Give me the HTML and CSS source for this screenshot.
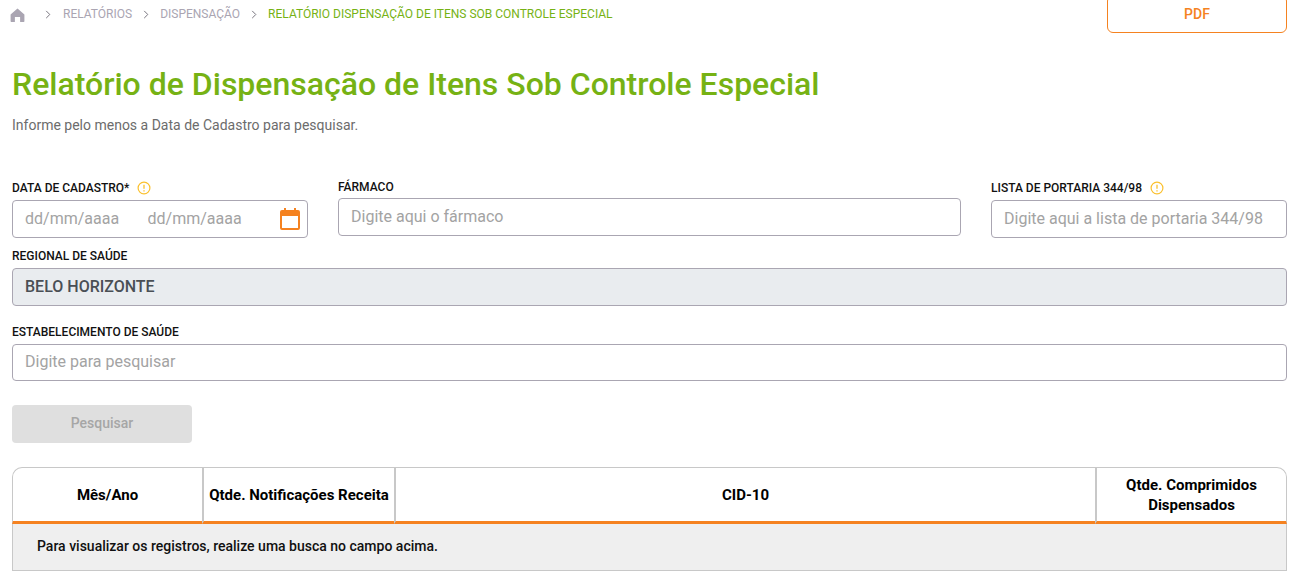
FILE: index.html
```html
<!DOCTYPE html>
<html lang="pt-BR">
<head>
    <meta charset="UTF-8">
    <meta name="viewport" content="width=device-width, initial-scale=1.0">
    <title>Relatório de Dispensação de Itens Sob Controle Especial</title>
    <link rel="stylesheet" href="styles.css">
</head>
<body>

<header class="top-bar">
    <nav class="breadcrumb">
        <svg class="home-icon" viewBox="0 0 16 15" fill="currentColor">
            <path d="M8 .6 .6 7v7.2c0 .4.3.7.7.7h3.9V9.6h5.6v5.3h3.9c.4 0 .7-.3.7-.7V7z"/>
        </svg>
        <svg class="chevron chevron-first" viewBox="0 0 6 10" fill="none" stroke="currentColor" stroke-width="1.1"><path d="M1 1l4 4-4 4"/></svg>
        <a class="crumb">Relatórios</a>
        <svg class="chevron" viewBox="0 0 6 10" fill="none" stroke="currentColor" stroke-width="1.1"><path d="M1 1l4 4-4 4"/></svg>
        <a class="crumb">Dispensação</a>
        <svg class="chevron" viewBox="0 0 6 10" fill="none" stroke="currentColor" stroke-width="1.1"><path d="M1 1l4 4-4 4"/></svg>
        <span class="crumb crumb-active">Relatório Dispensação de Itens Sob Controle Especial</span>
    </nav>
    <button class="pdf-button">PDF</button>
</header>

<main>
    <h1>Relatório de Dispensação de Itens Sob Controle Especial</h1>
    <p class="hint">Informe pelo menos a Data de Cadastro para pesquisar.</p>

    <section class="filters-row">
        <div class="field">
            <label class="field-label">Data de Cadastro*
                <svg class="info-icon" viewBox="0 0 14 14" fill="none" stroke="currentColor"><circle cx="7" cy="7" r="5.9" stroke-width="1.2"/><path d="M7 3.8v4" stroke-width="1.3"/><path d="M7 9.2v1.2" stroke-width="1.3"/></svg>
            </label>
            <div class="input date-range">
                <input class="date-input" type="text" placeholder="dd/mm/aaaa">
                <input class="date-input" type="text" placeholder="dd/mm/aaaa">
                <svg class="calendar-icon" viewBox="0 0 20 22" fill="#f58220">
                    <path d="M4 0h2v2h8V0h2v2h2a2 2 0 0 1 2 2v16a2 2 0 0 1-2 2H2a2 2 0 0 1-2-2V4a2 2 0 0 1 2-2h2zM2 8v12h16V8z"/>
                </svg>
            </div>
        </div>
        <div class="field field-farmaco">
            <label class="field-label">Fármaco</label>
            <input class="input" type="text" placeholder="Digite aqui o fármaco">
        </div>
        <div class="field">
            <label class="field-label">Lista de Portaria 344/98
                <svg class="info-icon" viewBox="0 0 14 14" fill="none" stroke="currentColor"><circle cx="7" cy="7" r="5.9" stroke-width="1.2"/><path d="M7 3.8v4" stroke-width="1.3"/><path d="M7 9.2v1.2" stroke-width="1.3"/></svg>
            </label>
            <input class="input" type="text" placeholder="Digite aqui a lista de portaria 344/98">
        </div>
    </section>

    <div class="field field-regional">
        <label class="field-label">Regional de Saúde</label>
        <input class="input input-disabled" type="text" value="BELO HORIZONTE" disabled>
    </div>

    <div class="field field-estab">
        <label class="field-label">Estabelecimento de Saúde</label>
        <input class="input" type="text" placeholder="Digite para pesquisar">
    </div>

    <button class="search-button" disabled>Pesquisar</button>

    <table class="results">
        <thead>
            <tr>
                <th class="col-month">Mês/Ano</th>
                <th class="col-notif">Qtde. Notificações Receita</th>
                <th>CID-10</th>
                <th class="col-qty">Qtde. Comprimidos Dispensados</th>
            </tr>
        </thead>
        <tbody>
            <tr>
                <td colspan="4">Para visualizar os registros, realize uma busca no campo acima.</td>
            </tr>
        </tbody>
    </table>
</main>

</body>
</html>
```

FILE: styles.css
```css
:root {
    --green: #76b214;
    --orange: #f58220;
    --border: #aaa6b2;
    --placeholder: #a3a3a3;
    --yellow: #fbc02d;
}

* { margin: 0; padding: 0; box-sizing: border-box; }

body {
    background: #fff;
    color: #000;
    font-family: Roboto, "Noto Sans", sans-serif;
    padding: 0 12px;
    overflow: hidden;
}

/* --- Top bar --- */
.top-bar {
    display: flex;
    justify-content: space-between;
    align-items: flex-start;
    height: 33px;
}

.breadcrumb {
    display: flex;
    align-items: center;
    height: 28px;
    font-size: 12px;
    color: #aaa5b2;
    text-transform: uppercase;
}
.home-icon {
    width: 15px;
    height: 14px;
    margin-left: -2px;
    margin-top: 1px;
}
.chevron {
    width: 6px;
    height: 9px;
    margin: 0 11px;
    color: #77737d;
}
.chevron-first { margin-left: 20px; margin-right: 12px; }
.crumb-active { color: var(--green); }

.pdf-button {
    width: 180px;
    height: 38px;
    margin-top: -5px;
    background: #fff;
    border: 1px solid var(--orange);
    border-radius: 6px;
    color: var(--orange);
    font-family: inherit;
    font-size: 14px;
    font-weight: 500;
}

/* --- Heading --- */
h1 {
    margin-top: 32px;
    font-size: 32px;
    line-height: 38px;
    font-weight: 500;
    color: var(--green);
}
.hint {
    margin-top: 12px;
    font-size: 14px;
    line-height: 20px;
    color: #6c6c6c;
}

/* --- Filters --- */
.filters-row {
    display: grid;
    grid-template-columns: 296px 1fr 296px;
    column-gap: 30px;
    margin-top: 45px;
}
.field { display: flex; flex-direction: column; }
.field-label {
    display: flex;
    align-items: center;
    gap: 8px;
    height: 20px;
    padding-bottom: 4px;
    font-size: 12px;
    font-weight: 500;
    color: #111;
    text-transform: uppercase;
}
.info-icon {
    width: 14px;
    height: 14px;
    color: var(--yellow);
}
.field-farmaco .field-label { height: 18px; padding-bottom: 5px; }

.input {
    width: 100%;
    height: 38px;
    padding: 0 12px 2px;
    background: #fff;
    border: 1px solid var(--border);
    border-radius: 4px;
    font-family: inherit;
    font-size: 16px;
    color: #495057;
    outline: none;
}
.input::placeholder { color: var(--placeholder); opacity: 1; }

.date-range {
    display: flex;
    align-items: center;
}
.date-input {
    width: 122.5px;
    border: 0;
    outline: none;
    font-family: inherit;
    font-size: 16px;
}
.date-input::placeholder { color: var(--placeholder); opacity: 1; }
.calendar-icon {
    width: 20px;
    height: 22px;
    margin-left: auto;
    margin-right: -5px;
    margin-bottom: -2px;
}

.field-regional { margin-top: 10px; }
.input-disabled {
    background: #e9ecef;
    color: #4a4f55;
    font-weight: 500;
}
.field-estab { margin-top: 18px; }
.field-estab .input { height: 37px; }

/* --- Search --- */
.search-button {
    display: block;
    width: 180px;
    height: 38px;
    margin-top: 24px;
    padding-bottom: 2px;
    background: #dfdfdf;
    border: 0;
    border-radius: 4px;
    color: #a6a6a6;
    font-family: inherit;
    font-size: 14px;
    font-weight: 500;
}

/* --- Results table --- */
.results {
    width: 100%;
    margin-top: 24px;
    table-layout: fixed;
    border-collapse: separate;
    border-spacing: 0;
}
.results th {
    height: 57px;
    padding: 0 4px;
    background: #fff;
    color: #000;
    font-size: 15px;
    font-weight: 700;
    line-height: 20px;
    border-top: 1px solid #c8c8c8;
    border-left: 2px solid #c8c8c8;
    border-bottom: 3px solid var(--orange);
}
.results th:first-child { border-left: 1px solid #c8c8c8; border-top-left-radius: 10px; }
.results th:last-child { border-right: 1px solid #c8c8c8; border-top-right-radius: 10px; }
.col-month { width: 190px; }
.col-notif { width: 192px; }
.col-qty { width: 192px; }
.results td {
    height: 47px;
    padding: 0 24px 2px;
    background: #efefef;
    color: #111;
    font-size: 14px;
    font-weight: 500;
    border-left: 1px solid #c8c8c8;
    border-right: 1px solid #c8c8c8;
    border-bottom: 1px solid #c8c8c8;
}
```
